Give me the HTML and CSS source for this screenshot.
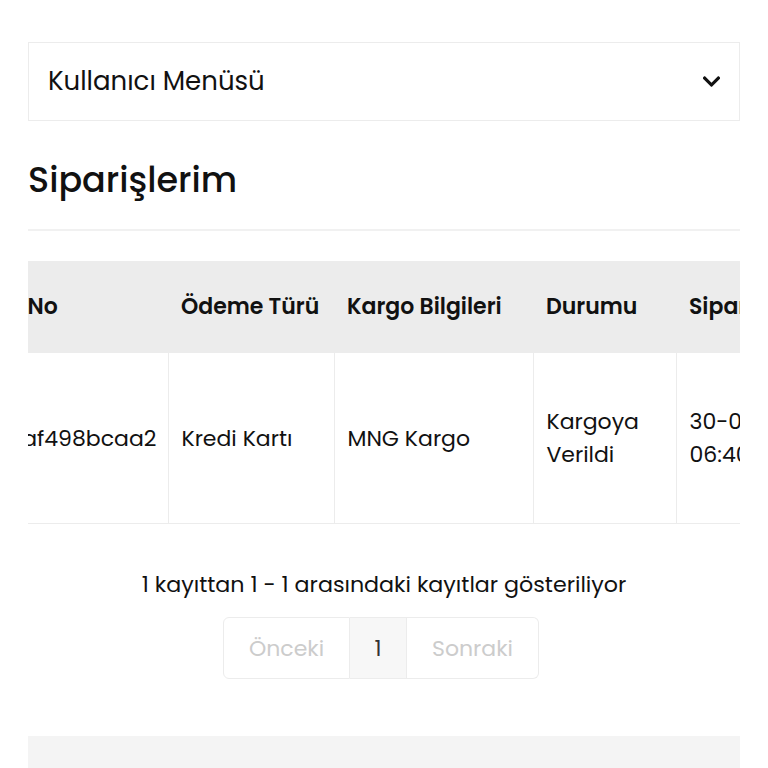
FILE: index.html
```html
<!DOCTYPE html>
<html lang="tr">
<head>
<meta charset="utf-8">
<title>Siparişlerim</title>
<link rel="stylesheet" href="styles.css">
</head>
<body>
<main class="page">
  <div class="user-menu">
    <span class="user-menu-title">Kullanıcı Menüsü</span>
    <svg class="chevron" viewBox="12 122 424 268" aria-hidden="true"><path d="M207.029 381.476L12.686 187.132c-9.373-9.373-9.373-24.569 0-33.941l22.667-22.667c9.357-9.357 24.522-9.375 33.901-.04L224 284.505l154.745-154.021c9.379-9.335 24.544-9.317 33.901.04l22.667 22.667c9.373 9.373 9.373 24.569 0 33.941L240.971 381.476c-9.373 9.372-24.569 9.372-33.942 0z"/></svg>
  </div>

  <h1 class="page-title">Siparişlerim</h1>
  <div class="divider"></div>

  <div class="table-wrap" id="tableWrap">
    <table class="orders">
      <thead>
        <tr>
          <th class="c-no">Sipariş No</th>
          <th class="c-pay">Ödeme Türü</th>
          <th class="c-cargo">Kargo Bilgileri</th>
          <th class="c-status">Durumu</th>
          <th class="c-date">Sipariş Tarihi</th>
          <th class="c-total">Toplam</th>
          <th class="c-detail">Detay</th>
        </tr>
      </thead>
      <tbody>
        <tr>
          <td class="c-no nowrap">1e05d3af498bcaa2</td>
          <td>Kredi Kartı</td>
          <td>MNG Kargo</td>
          <td>Kargoya Verildi</td>
          <td>30-05-2024 06:40</td>
          <td>249,90 TL</td>
          <td>Detay</td>
        </tr>
      </tbody>
    </table>
  </div>

  <p class="table-info">1 kayıttan 1 - 1 arasındaki kayıtlar gösteriliyor</p>

  <nav class="pager">
    <span class="pager-item prev disabled">Önceki</span>
    <span class="pager-item current">1</span>
    <span class="pager-item next disabled">Sonraki</span>
  </nav>

  <div class="footer-band"></div>
</main>
<script src="script.js"></script>
</body>
</html>
```
FILE: styles.css
```css
html, body {
  margin: 0;
  padding: 0;
  background: #ffffff;
}
body {
  font-family: "Poppins", Inter, "Noto Sans", sans-serif;
  color: #111111;
}
.page {
  padding: 42px 28px 0;
  overflow: hidden;
  height: 768px;
  box-sizing: border-box;
}
.user-menu {
  display: flex;
  align-items: center;
  justify-content: space-between;
  height: 79px;
  box-sizing: border-box;
  border: 1px solid #ececec;
  padding: 0 19px 0 19px;
}
.user-menu-title {
  font-size: 26px;
  font-weight: 400;
}
.chevron {
  fill: #111;
  width: 17px;
  height: 11px;
}
.page-title {
  margin: 37px 0 0;
  font-size: 35px;
  line-height: 44px;
  font-weight: 500;
}
.divider {
  margin-top: 27px;
  border-top: 2px solid #f1f1f1;
}
.table-wrap {
  margin-top: 30px;
  overflow-x: auto;
  scrollbar-width: none;
}
.table-wrap::-webkit-scrollbar { display: none; }
.orders {
  border-collapse: collapse;
  width: max-content;
  font-size: 22px;
  line-height: 33px;
}
.orders th {
  background: #ececec;
  font-weight: 600;
  text-align: left;
  padding: 29px 12px 30px;
  white-space: nowrap;
}
.orders td {
  padding: 52px 12px 52px;
  border-left: 1px solid #ececec;
  border-bottom: 1px solid #ececec;
  vertical-align: middle;
}
.orders td:first-child { border-left: 0; }
.nowrap { white-space: nowrap; }
.c-pay { width: 142px; }
.c-cargo { width: 175px; }
.c-status { width: 119px; }
.c-date { width: 140px; }
.c-total { width: 130px; }
.c-detail { width: 100px; }
.table-info {
  margin: 44px 0 0;
  text-align: center;
  font-size: 22.2px;
  line-height: 33px;
}
.pager {
  display: flex;
  justify-content: center;
  margin: 16px 6px 0 0;
}
.pager-item {
  display: flex;
  align-items: center;
  justify-content: center;
  height: 62px;
  box-sizing: border-box;
  border: 1px solid #ececec;
  font-size: 22px;
}
.pager-item + .pager-item { border-left: 0; }
.pager-item.prev { border-radius: 6px 0 0 6px; width: 127px; }
.pager-item.next { border-radius: 0 6px 6px 0; width: 132px; }
.pager-item.current { background: #f7f7f7; color: #333; width: 57px; }
.pager-item.disabled { color: #cccccc; }
.footer-band {
  margin-top: 57px;
  height: 60px;
  background: #f4f4f4;
}
```
FILE: script.js
```js
var wrap = document.getElementById('tableWrap');
var first = wrap.querySelector('th');
wrap.scrollLeft = first.offsetWidth - 141;
```
